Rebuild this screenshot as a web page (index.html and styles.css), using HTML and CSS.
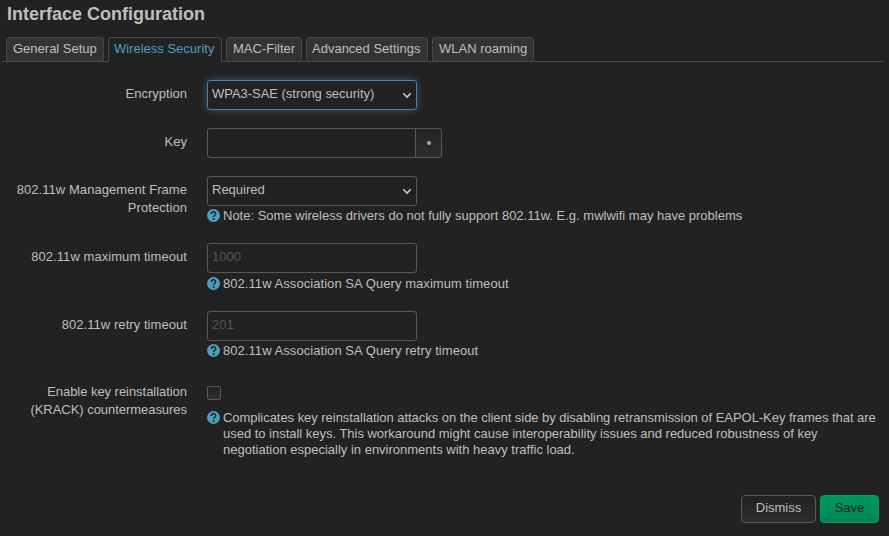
FILE: index.html
```html
<!DOCTYPE html>
<html lang="en">
<head>
<meta charset="utf-8">
<title>Interface Configuration</title>
<link rel="stylesheet" href="styles.css">
</head>
<body>
<svg width="0" height="0" class="defs"><defs>
<symbol id="help" viewBox="0 0 13 13"><circle cx="6.5" cy="6.5" r="6.5" fill="#4a9fbf"/><path d="M4.3 5C4.3 2.1 8.7 2.2 8.7 4.7C8.7 6.3 6.6 6.2 6.6 8" fill="none" stroke="#222" stroke-width="1.5"/><circle cx="6.6" cy="10.1" r="1" fill="#222"/></symbol>
<symbol id="chevron" viewBox="0 0 10 7"><path d="M1.2 1.3L5 5.1L8.8 1.3" fill="none" stroke="#ccc" stroke-width="1.5"/></symbol>
</defs></svg>
<main class="modal">
<h1>Interface Configuration</h1>
<nav class="tabs">
<a class="tab general">General Setup</a><a class="tab security active">Wireless Security</a><a class="tab filter">MAC-Filter</a><a class="tab advanced">Advanced Settings</a><a class="tab roaming">WLAN roaming</a>
</nav>
<form class="form">
<div class="row short"><label>Encryption</label><div class="field"><div class="control focused">WPA3-SAE (strong security)<svg class="chevron"><use href="#chevron"/></svg></div></div></div>
<div class="row short"><label>Key</label><div class="field"><div class="group"><div class="control key"></div><div class="reveal"><i></i></div></div></div></div>
<div class="row"><label class="wide">802.11w Management Frame Protection</label><div class="field"><div class="control">Required<svg class="chevron"><use href="#chevron"/></svg></div><div class="hint raised"><svg class="help"><use href="#help"/></svg><p>Note: Some wireless drivers do not fully support 802.11w. E.g. mwlwifi may have problems</p></div></div></div>
<div class="row tall"><label class="wide">802.11w maximum timeout</label><div class="field"><div class="control placeholder">1000</div><div class="hint"><svg class="help"><use href="#help"/></svg><p class="wide">802.11w Association SA Query maximum timeout</p></div></div></div>
<div class="row"><label class="wide">802.11w retry timeout</label><div class="field"><div class="control placeholder">201</div><div class="hint raised"><svg class="help"><use href="#help"/></svg><p class="wide">802.11w Association SA Query retry timeout</p></div></div></div>
<div class="row last"><label class="tight">Enable key reinstallation (KRACK) countermeasures</label><div class="field"><div class="check"></div><div class="hint"><svg class="help"><use href="#help"/></svg><p><span class="tight">Complicates key reinstallation attacks on the client side by disabling retransmission of EAPOL-Key frames that are</span><br><span class="snug">used to install keys. This workaround might cause interoperability issues and reduced robustness of key</span><br>negotiation especially in environments with heavy traffic load.</p></div></div></div>
</form>
<footer class="actions"><button class="button dismiss">Dismiss</button><button class="button save">Save</button></footer>
</main>
</body>
</html>
```
FILE: styles.css
```css
* { box-sizing: border-box; }
body { margin: 0; background: #222; color: #bfbfbf; font: 13px/18px "Liberation Sans", Arial, sans-serif; overflow: hidden; }
.defs { display: block; height: 0; }
.modal { height: 536px; padding: 3px 5px 0 2px; }
h1 { margin: 0; padding-left: 5px; height: 34px; font-size: 18px; line-height: 22px; }
.tabs { display: flex; gap: 4px; height: 25px; padding-left: 4px; border-bottom: 1px solid #484848; }
.tab { height: 24px; padding: 0 6px; border: 1px solid #484848; border-bottom: 0; border-radius: 4px 4px 0 0; background: #333; line-height: 22px; white-space: nowrap; }
.tab.active { height: 25px; background: #222; color: #4a9fbf; }
.general { width: 98px; }
.security { width: 114px; padding-left: 5px; }
.filter { width: 76px; }
.advanced { width: 122px; padding-left: 5px; }
.roaming { width: 102px; }
.form { padding-top: 18px; }
.row { display: flex; gap: 20px; height: 67px; }
.row.short { height: 48px; }
.row.tall { height: 68px; }
.row.last { height: 117px; }
label { width: 185px; padding: 5px 0 0 10px; text-align: right; }
.wide { letter-spacing: .06px; }
.tight { letter-spacing: -.042px; }
.snug { letter-spacing: -.02px; }
.field { flex: 1; min-width: 0; }
.control { position: relative; width: 210px; height: 30px; padding: 0 4px; border: 1px solid #585858; border-radius: 3px; line-height: 26px; }
.focused { border-color: #4d7fa8; box-shadow: 0 0 7px rgba(65, 145, 205, .5); letter-spacing: -.03px; }
.placeholder { color: #555; }
.chevron { position: absolute; right: 4px; top: 11px; width: 10px; height: 7px; }
.group { display: flex; }
.key { width: 208px; border-right: 0; border-radius: 3px 0 0 3px; }
.reveal { display: flex; align-items: center; justify-content: center; width: 27px; height: 30px; border: 1px solid #585858; border-radius: 0 3px 3px 0; background: linear-gradient(#242424, #2d2d2d); }
.reveal i { width: 4px; height: 4px; border-radius: 50%; background: #aaa; }
.hint { display: flex; gap: 3px; padding-top: 3px; line-height: 16px; }
.hint.raised { padding-top: 2px; }
.hint p { margin: 0; white-space: nowrap; }
.help { flex: none; width: 13px; height: 13px; margin-top: 1px; }
.check { width: 14px; height: 14px; margin: 8px 0 7px; border: 1px solid #585858; border-radius: 2px; background: linear-gradient(#242424, #303030); }
.actions { display: flex; justify-content: flex-end; gap: 4px; padding: 0 5px 0 0; }
.button { height: 28px; padding: 0 0 2px; border: 1px solid #585858; border-radius: 4px; font: inherit; color: inherit; background: linear-gradient(#222, #2d2d2d); }
.dismiss { width: 75px; }
.save { width: 59px; border-color: #00a066; background: linear-gradient(#009860, #008654); color: #222; }
```
